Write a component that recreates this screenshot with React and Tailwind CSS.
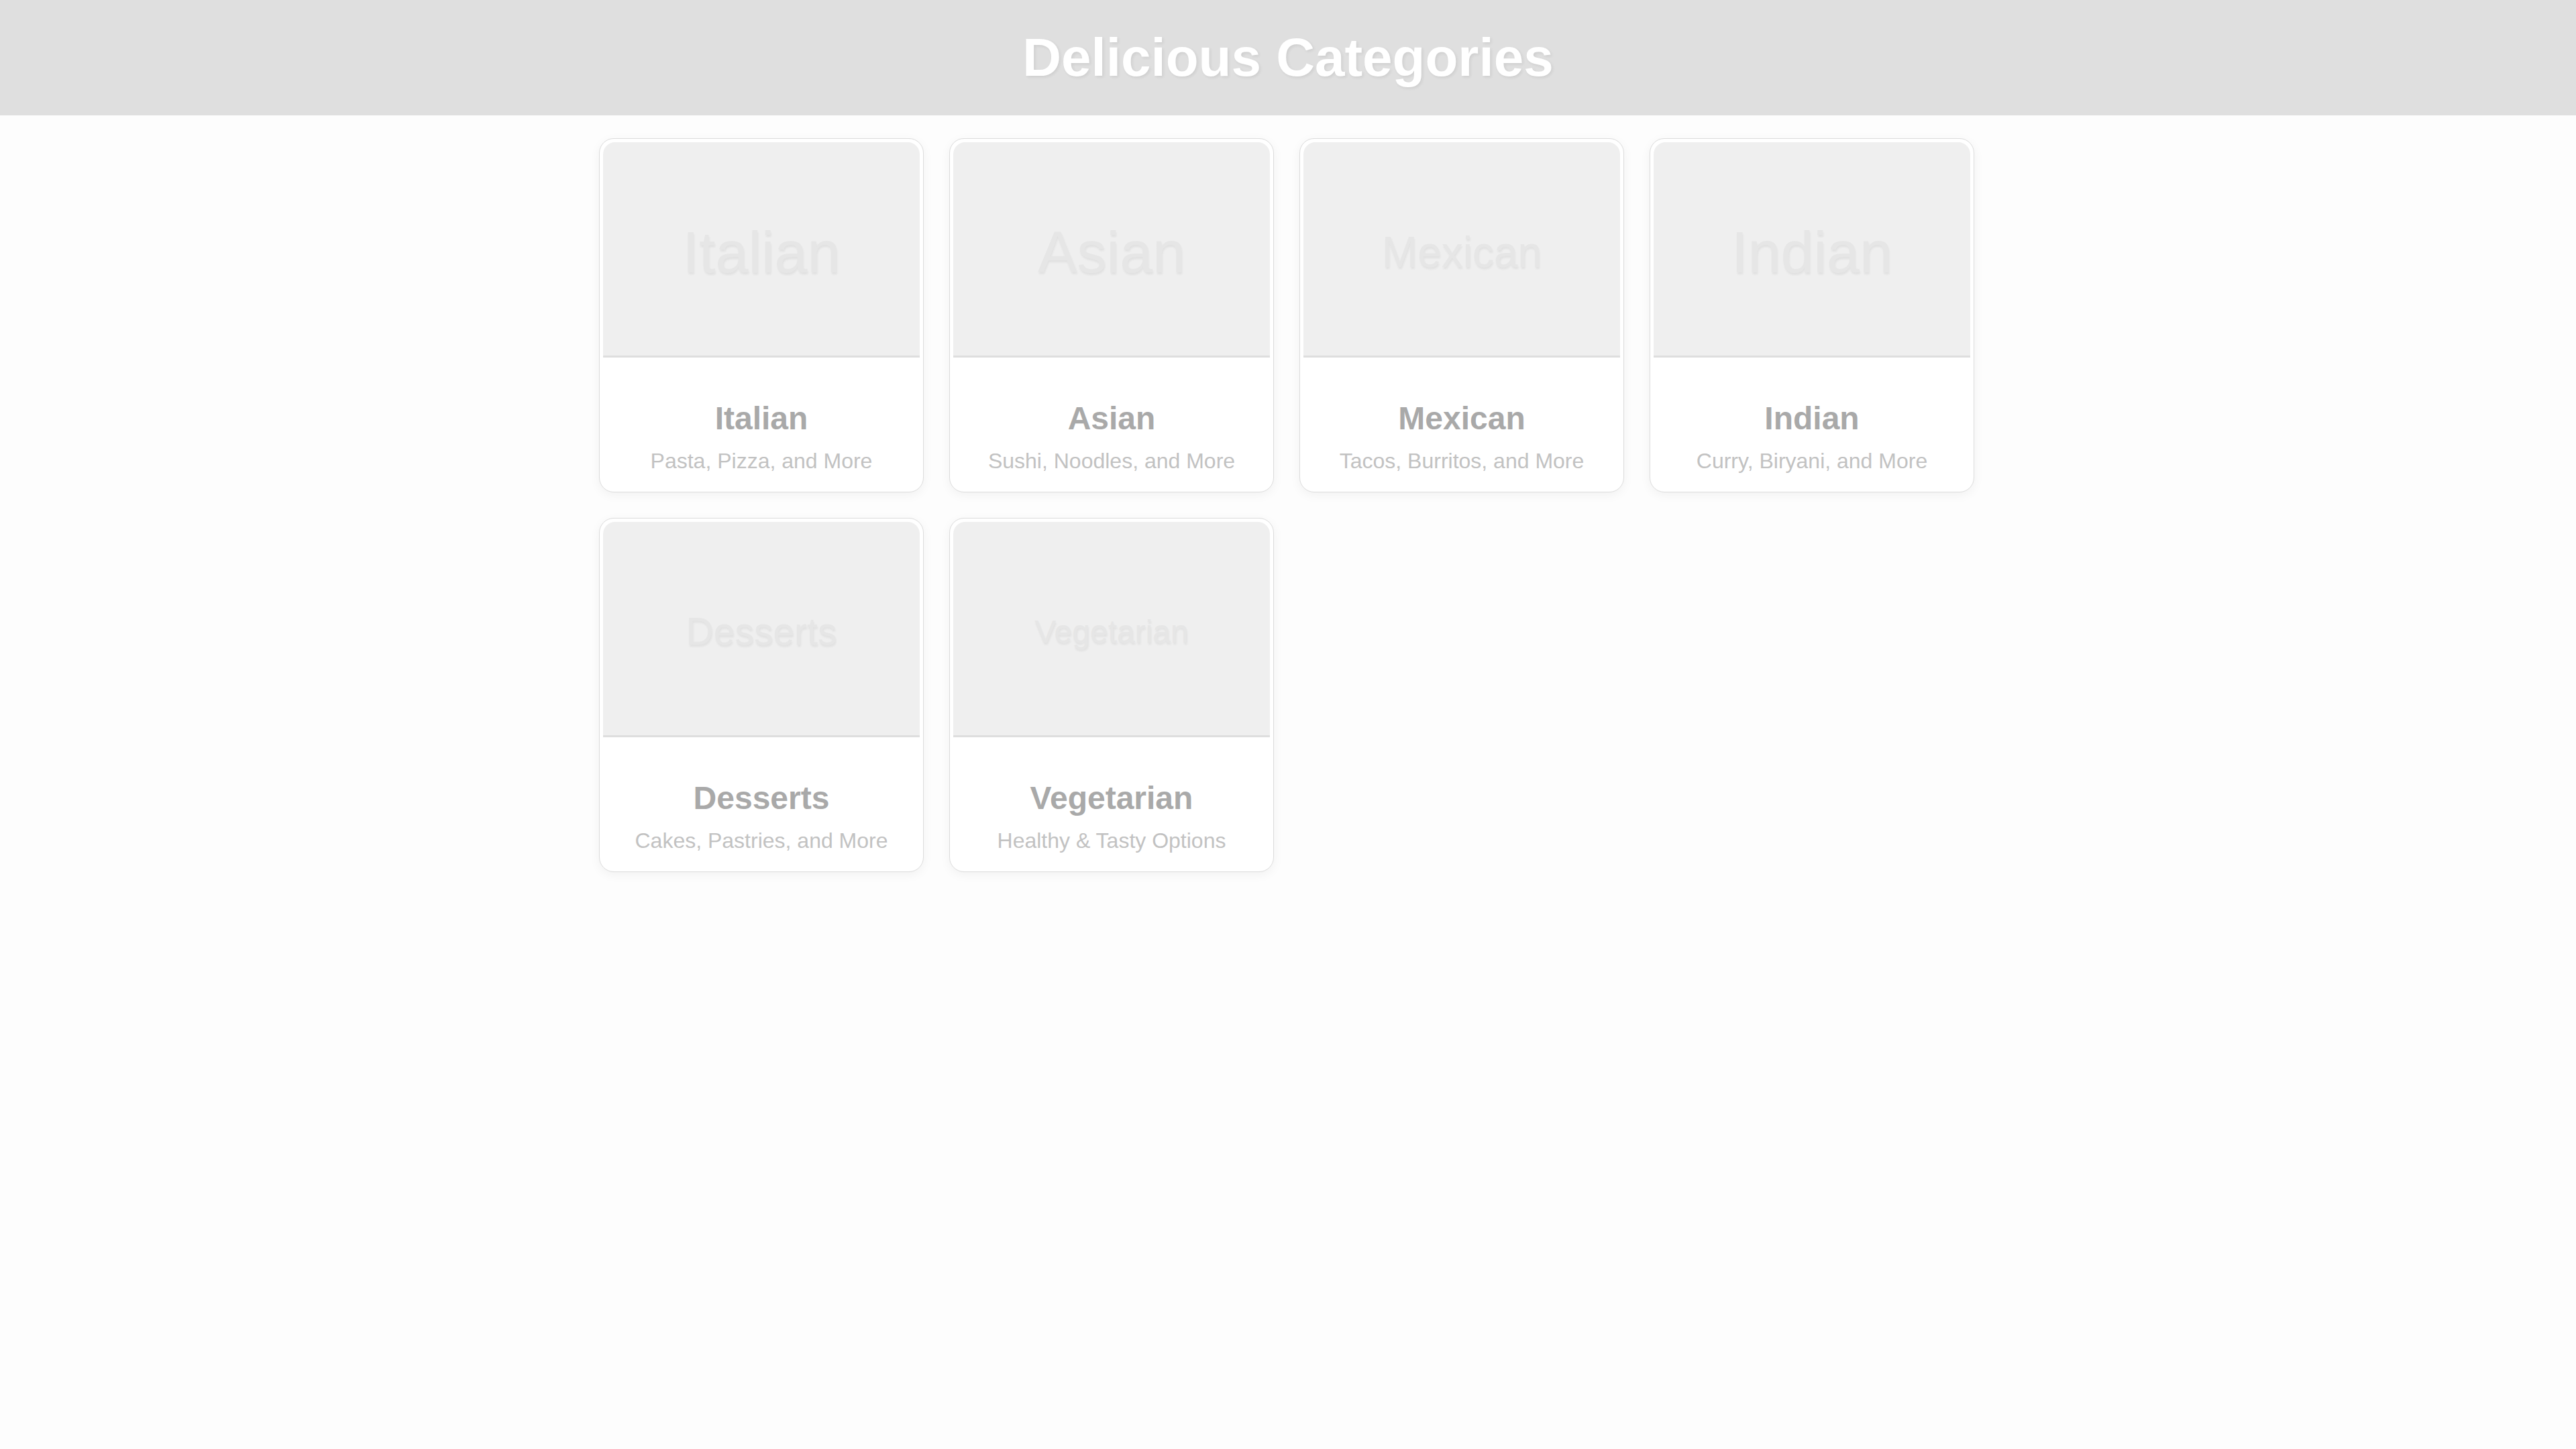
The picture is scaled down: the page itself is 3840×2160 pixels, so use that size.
const categories = [
  { name: "Italian", desc: "Pasta, Pizza, and More", size: "text-[88px]" },
  { name: "Asian", desc: "Sushi, Noodles, and More", size: "text-[88px]" },
  { name: "Mexican", desc: "Tacos, Burritos, and More", size: "text-[64px]" },
  { name: "Indian", desc: "Curry, Biryani, and More", size: "text-[88px]" },
  { name: "Desserts", desc: "Cakes, Pastries, and More", size: "text-[57px]" },
  { name: "Vegetarian", desc: "Healthy & Tasty Options", size: "text-[48px]" },
];

function CategoryCard({ name, desc, size }) {
  return (
    <div className="flex h-[528px] flex-col rounded-[22px] border border-[#dcdcdc] bg-white p-[5px] shadow-[0_4px_16px_rgba(0,0,0,0.05)]">
      <div className="flex h-[321px] items-center justify-center rounded-t-[18px] border-b-[3px] border-[#dedede] bg-[#efefef] pt-[10px]">
        <span className={`${size} font-normal text-[#e6e6e6] [text-shadow:1px_3px_3px_rgba(0,0,0,0.06)]`}>{name}</span>
      </div>
      <div className="flex flex-1 flex-col items-center pt-[63px]">
        <h3 className="text-[48px] font-bold leading-[1.15] text-[#a9a9a9]">{name}</h3>
        <p className="mt-[18px] text-[32px] leading-[1.15] text-[#c2c2c2]">{desc}</p>
      </div>
    </div>
  );
}

export default function App() {
  return (
    <div className="min-h-screen bg-[#fdfdfd] font-['Liberation_Sans',Arial,sans-serif]">
      <header className="flex h-[172px] items-center justify-center bg-[#dfdfdf]">
        <h1 className="text-[80px] font-bold text-white [text-shadow:2px_2px_4px_rgba(0,0,0,0.08)]">Delicious Categories</h1>
      </header>
      <main className="flex justify-center pt-[34px]">
        <div className="ml-[-4px] grid grid-cols-[repeat(4,484px)] gap-[38px]">
          {categories.map((c) => (
            <CategoryCard key={c.name} {...c} />
          ))}
        </div>
      </main>
    </div>
  );
}
